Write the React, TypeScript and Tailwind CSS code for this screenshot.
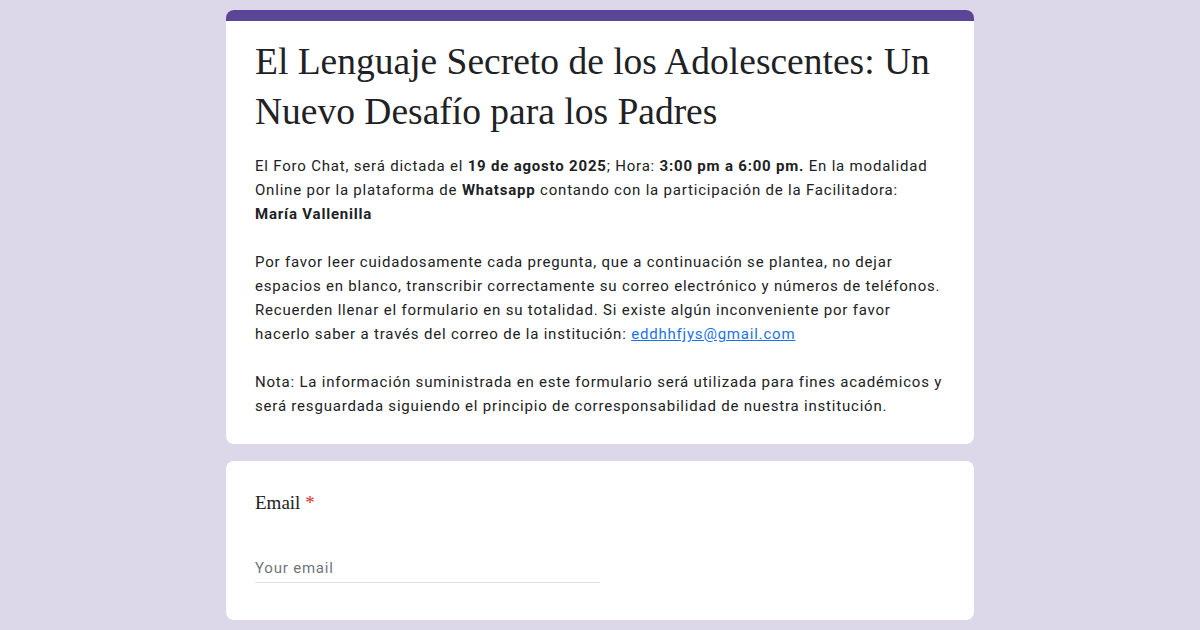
import React from "react";

export default function App() {
  const body = { fontFamily: "Roboto, 'Liberation Sans', sans-serif" };
  const serif = { fontFamily: "'Liberation Serif', 'Times New Roman', serif" };
  return (
    <div className="w-[1200px] h-[630px] overflow-hidden bg-[#dcd8e9]">
      <div className="w-[748px] mx-auto pt-[10px] flex flex-col gap-[17px]">
        <div className="bg-white rounded-[8px] overflow-hidden">
          <div className="h-[11px] bg-[#5b4598]" />
          <div className="px-[29px] pt-[16px] pb-[26px]">
            <h1 className="text-[37.5px] leading-[50px] text-[#202124]" style={serif}>
              El Lenguaje Secreto de los Adolescentes: Un Nuevo Desafío para los Padres
            </h1>
            <div className="mt-[17px] text-[15px] leading-[24px] text-[#202124] tracking-[0.8px]" style={body}>
              <p>
                El Foro Chat, será dictada el <b className="font-bold">19 de agosto 2025</b>; Hora: <b className="font-bold">3:00 pm a 6:00 pm.</b> En la modalidad Online por la plataforma de <b className="font-bold">Whatsapp</b> contando con la participación de la Facilitadora: <b className="font-bold">María Vallenilla</b>
              </p>
              <p className="mt-[24px]">
                Por favor leer cuidadosamente cada pregunta, que a continuación se plantea, no dejar espacios en blanco, transcribir correctamente su correo electrónico y números de teléfonos. Recuerden llenar el formulario en su totalidad. Si existe algún inconveniente por favor hacerlo saber a través del correo de la institución: <a className="text-[#1a73e8] underline">eddhhfjys@gmail.com</a>
              </p>
              <p className="mt-[24px]">
                Nota: La información suministrada en este formulario será utilizada para fines académicos y será resguardada siguiendo el principio de corresponsabilidad de nuestra institución.
              </p>
            </div>
          </div>
        </div>
        <div className="bg-white rounded-[8px] px-[29px] pt-[28px] h-[159px]">
          <div className="text-[19px] leading-[28px] text-[#202124]" style={serif}>
            Email <span className="text-[#d93025]">*</span>
          </div>
          <div className="mt-[39px] w-[345px] border-b border-[#e0e0e0] pb-[2px]">
            <div className="text-[15px] leading-[24px] text-[#70757a] tracking-[0.8px]" style={body}>Your email</div>
          </div>
        </div>
      </div>
    </div>
  );
}
